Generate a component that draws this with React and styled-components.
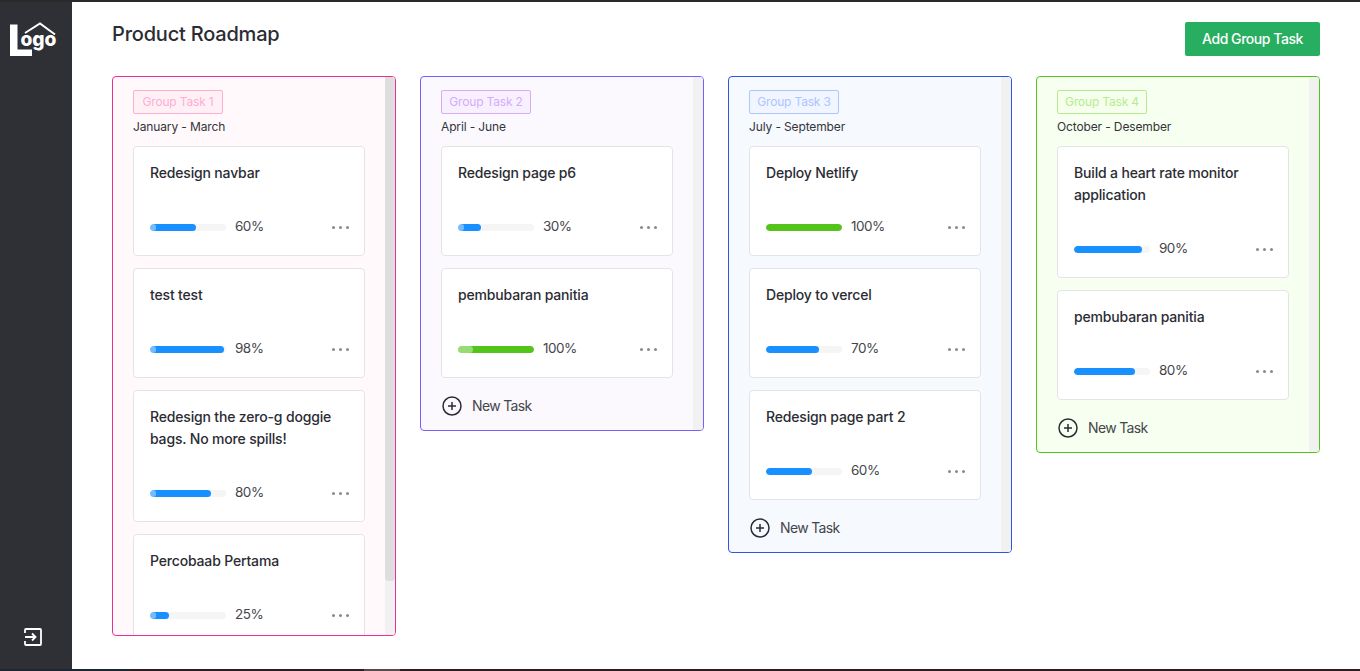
import React from "react";
import styled, { createGlobalStyle } from "styled-components";

const Global = createGlobalStyle`
  html, body { margin: 0; padding: 0; height: 100%; overflow: hidden; background: #fff; }
  body { font-family: "Inter", "Roboto", "Liberation Sans", sans-serif; color: #2b2c33; }
  * { box-sizing: border-box; }
`;

const Frame = styled.div`
  height: 671px;
  display: flex;
  flex-direction: column;
`;
const TopEdge = styled.div`
  height: 2px;
  flex: none;
  background: #2a2a2b;
`;
const BottomEdge = styled.div`
  height: 2px;
  flex: none;
  background: linear-gradient(90deg, #1c2731 0, #1c2731 130px, #2c1d20 130px, #2c1d20 364px, #5a4a4c 364px, #5a4a4c 400px, #2e1c1e 400px, #2e1c1e 100%);
`;
const Body = styled.div`
  flex: 1;
  min-height: 0;
  display: flex;
`;
const Sidebar = styled.aside`
  width: 72px;
  flex: none;
  background: #2f3036;
  display: flex;
  flex-direction: column;
  align-items: flex-start;
  justify-content: space-between;
  padding: 20px 0 23px 10px;
`;
const Logout = styled.button`
  border: 0;
  background: none;
  padding: 0;
  margin-left: 14px;
  width: 18px;
  height: 18px;
  display: block;
  line-height: 0;
`;
const Main = styled.main`
  flex: 1;
  min-width: 0;
  padding: 20px 40px 0;
`;
const Header = styled.header`
  display: flex;
  justify-content: space-between;
  align-items: flex-start;
  height: 34px;
  margin-bottom: 20px;
`;
const Title = styled.h1`
  margin: 0;
  font-size: 20px;
  line-height: 24px;
  font-weight: 500;
  letter-spacing: -0.2px;
  color: #2b2c33;
`;
const AddButton = styled.button`
  width: 135px;
  height: 34px;
  border: 0;
  border-radius: 2px;
  background: #27ae60;
  color: #fff;
  font: 500 14px/20px "Inter", sans-serif;
  letter-spacing: -0.45px;
`;
const Board = styled.div`
  display: flex;
  align-items: flex-start;
  gap: 24px;
`;
const Column = styled.section`
  width: 284px;
  max-height: 560px;
  flex: none;
  display: flex;
  overflow: hidden;
  border: 1px solid ${(p) => p.$accent};
  border-radius: 4px;
  background: ${(p) => p.$bg};
`;
const ColumnBody = styled.div`
  flex: 1;
  min-width: 0;
  padding: 13px 20px 14px;
`;
const Rail = styled.div`
  width: 10px;
  flex: none;
  background: #f1f1f1;
`;
const Thumb = styled.div`
  background: #dedede;
  border-radius: 0 0 4px 4px;
`;
const Tag = styled.span`
  display: inline-flex;
  align-items: center;
  justify-content: center;
  width: 90px;
  height: 24px;
  border: 1px solid ${(p) => p.$line};
  border-radius: 2px;
  background: ${(p) => p.$fill};
  color: ${(p) => p.$line};
  font-size: 12px;
  letter-spacing: -0.18px;
  white-space: nowrap;
`;
const TagRow = styled.div`
  height: 24px;
  line-height: 0;
`;
const Period = styled.div`
  margin: 3px 0 9px;
  font-size: 12px;
  line-height: 20px;
  letter-spacing: -0.13px;
  color: #33343a;
`;
const CardList = styled.div`
  display: flex;
  flex-direction: column;
  gap: 12px;
`;
const Card = styled.article`
  width: 232px;
  background: #fff;
  border: 1px solid #e4e4e7;
  border-radius: 4px;
  padding: 15px 16px 17px;
`;
const CardTitle = styled.div`
  font-size: 14px;
  line-height: 22px;
  font-weight: 500;
  letter-spacing: -0.17px;
  color: #2b2c33;
  margin-bottom: 32px;
`;
const CardFooter = styled.div`
  display: flex;
  align-items: center;
  height: 22px;
`;
const Track = styled.div`
  position: relative;
  width: 76px;
  height: 7px;
  flex: none;
  border-radius: 4px;
  background: #f5f5f5;
  overflow: hidden;
`;
const Fill = styled.div`
  height: 100%;
  border-radius: 4px;
  background: ${(p) => (p.$done ? "#52c41a" : "#1890ff")};
`;
const Segment = styled.div`
  position: absolute;
  left: 0;
  top: 0;
  bottom: 0;
  border-radius: 4px;
  background: rgba(255, 255, 255, 0.4);
`;
const Percent = styled.span`
  margin: -2px 0 0 9px;
  font-size: 13.5px;
  color: #45464c;
  letter-spacing: -0.5px;
`;
const Dots = styled.div`
  margin-left: auto;
  margin-right: -1px;
  display: flex;
  gap: 4px;
`;
const Dot = styled.span`
  width: 3px;
  height: 3px;
  border-radius: 50%;
  background: #8a8a8a;
`;
const NewTask = styled.div`
  display: flex;
  align-items: center;
  gap: 10px;
  height: 20px;
  margin: 18px 0 0 1px;
  font-size: 14px;
  letter-spacing: -0.65px;
  color: #45464c;
`;
const NewTaskLabel = styled.span`
  margin-top: -2px;
`;
const LogoSvg = styled.svg`
  display: block;
  overflow: visible;
`;

const LogoMark = () => (
  <LogoSvg width="48" height="36" viewBox="0 0 48 36" aria-hidden="true">
    <path d="M0 2.5h7.5v25H22V34H0z" fill="#fff" />
    <path d="M15 11 30 1.5 45 12.5" fill="none" stroke="#fff" strokeWidth="2" />
    <text x="10.5" y="23.5" fill="#fff" fontFamily="Inter, sans-serif" fontWeight="800" fontSize="20" textLength="36" lengthAdjust="spacingAndGlyphs">ogo</text>
  </LogoSvg>
);
const ExitIcon = () => (
  <svg width="18" height="18" viewBox="0 0 18 18" fill="none" stroke="#fff" strokeWidth="1.8" aria-hidden="true">
    <path d="M1 5V2a1 1 0 0 1 1-1h14a1 1 0 0 1 1 1v14a1 1 0 0 1-1 1H2a1 1 0 0 1-1-1v-3" />
    <path d="M1 9h10M8 5.5 11.5 9 8 12.5" />
  </svg>
);
const PlusIcon = () => (
  <svg width="20" height="20" viewBox="0 0 20 20" fill="none" stroke="#2b2c33" strokeWidth="1.5" aria-hidden="true">
    <circle cx="10" cy="10" r="9" />
    <path d="M10 6v8M6 10h8" />
  </svg>
);

const groups = [
  {
    name: "Group Task 1", period: "January - March", accent: "#eb2f96", bg: "#fff9fb", line: "#ffadd2", fill: "#fff0f6", thumb: 504, overflowing: true,
    tasks: [
      { t: "Redesign navbar", p: 60, s: 8 },
      { t: "test test", p: 98, s: 8 },
      { t: "Redesign the zero-g doggie bags. No more spills!", p: 80, s: 8 },
      { t: "Percobaab Pertama", p: 25, s: 8 },
    ],
  },
  {
    name: "Group Task 2", period: "April - June", accent: "#7a5cff", bg: "#fbf9fd", line: "#d3adf7", fill: "#f9f0ff",
    tasks: [
      { t: "Redesign page p6", p: 30, s: 8 },
      { t: "pembubaran panitia", p: 100, s: 20 },
    ],
  },
  {
    name: "Group Task 3", period: "July - September", accent: "#2f54eb", bg: "#f6f9fe", line: "#adc6ff", fill: "#f0f5ff",
    tasks: [
      { t: "Deploy Netlify", p: 100 },
      { t: "Deploy to vercel", p: 70 },
      { t: "Redesign page part 2", p: 60 },
    ],
  },
  {
    name: "Group Task 4", period: "October - Desember", accent: "#52c41a", bg: "#f7fff1", line: "#b7eb8f", fill: "#f6ffed",
    tasks: [
      { t: "Build a heart rate monitor application", p: 90 },
      { t: "pembubaran panitia", p: 80 },
    ],
  },
];

export default function App() {
  return (
    <Frame>
      <Global />
      <TopEdge />
      <Body>
        <Sidebar>
          <LogoMark />
          <Logout aria-label="Log out"><ExitIcon /></Logout>
        </Sidebar>
        <Main>
          <Header>
            <Title>Product Roadmap</Title>
            <AddButton>Add Group Task</AddButton>
          </Header>
          <Board>
            {groups.map((g) => (
              <Column key={g.name} $accent={g.accent} $bg={g.bg}>
                <ColumnBody>
                  <TagRow><Tag $line={g.line} $fill={g.fill}>{g.name}</Tag></TagRow>
                  <Period>{g.period}</Period>
                  <CardList>
                    {g.tasks.map((task) => (
                      <Card key={task.t}>
                        <CardTitle>{task.t}</CardTitle>
                        <CardFooter>
                          <Track>
                            <Fill $done={task.p === 100} style={{ width: `${task.p}%` }} />
                            {task.s ? <Segment style={{ width: `${task.s}%` }} /> : null}
                          </Track>
                          <Percent>{task.p}%</Percent>
                          <Dots><Dot /><Dot /><Dot /></Dots>
                        </CardFooter>
                      </Card>
                    ))}
                  </CardList>
                  {g.overflowing ? null : <NewTask><PlusIcon /><NewTaskLabel>New Task</NewTaskLabel></NewTask>}
                </ColumnBody>
                <Rail>{g.thumb ? <Thumb style={{ height: g.thumb }} /> : null}</Rail>
              </Column>
            ))}
          </Board>
        </Main>
      </Body>
      <BottomEdge />
    </Frame>
  );
}
